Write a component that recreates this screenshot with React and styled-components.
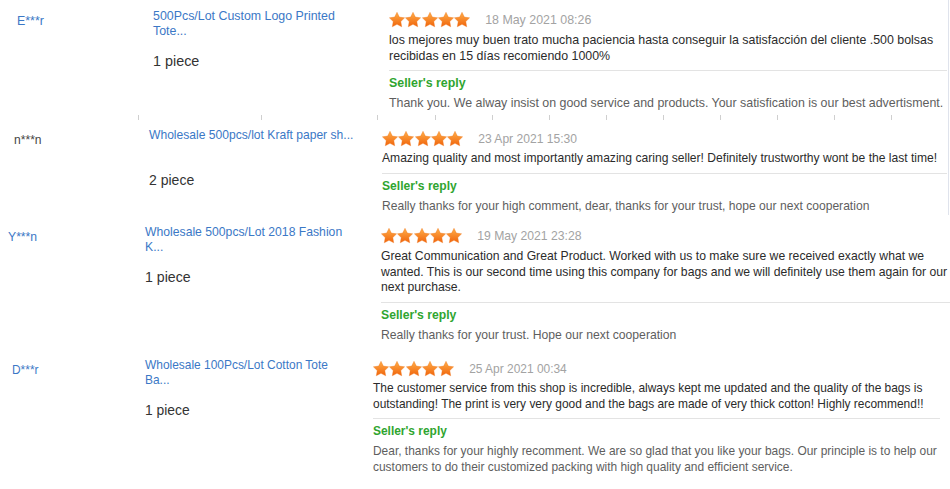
import React from 'react';
import styled, { createGlobalStyle } from 'styled-components';

const Global = createGlobalStyle`
  html, body { margin: 0; padding: 0; background: #fff; }
  body { font-family: "Liberation Sans", Arial, sans-serif; }
`;

const Page = styled.div`
  width: 950px;
  height: 489px;
  overflow: hidden;
  background: #fff;
  display: flex;
  flex-direction: column;
`;

const Strip = styled.section`
  box-sizing: border-box;
  flex-shrink: 0;
  height: ${p => p.$h}px;
  width: ${p => (p.$edge ? '949px' : '950px')};
  padding-top: ${p => p.$top}px;
  padding-left: ${p => p.$left}px;
  border-right: ${p => (p.$edge ? '1px solid #dfe3ec' : 'none')};
  font-size: ${p => p.$fs}px;
  display: flex;
  flex-direction: column;
`;

const Row = styled.div`
  display: grid;
  grid-template-columns: ${p => p.$nameW}px ${p => p.$prodW}px ${p => p.$revW}px;
  align-items: start;
`;

const Buyer = styled.div`
  margin-top: 1.5px;
  font-size: 1em;
  line-height: 15px;
  color: ${p => (p.$plain ? '#444' : '#3b78c6')};
  white-space: nowrap;
`;

const Product = styled.div`
  margin-top: -3px;
  display: flex;
  flex-direction: column;
`;

const Title = styled.div`
  height: 30px;
  font-size: 1em;
  line-height: 15px;
  color: #3b78c6;
  white-space: nowrap;
`;

const Qty = styled.div`
  margin-top: 14px;
  font-size: 1.16em;
  line-height: 17px;
  color: #333;
`;

const Review = styled.div`
  display: flex;
  flex-direction: column;
`;

const Head = styled.div`
  height: 16px;
  display: flex;
  align-items: center;
`;

const Stars = styled.div`
  display: flex;
  gap: 0.3px;
`;

const Date = styled.span`
  margin-left: 15px;
  font-size: 1em;
  color: #a3a3a3;
  white-space: nowrap;
`;

const Body = styled.div`
  margin-top: ${p => p.$gap}px;
  font-size: 1em;
  line-height: 15.5px;
  color: #2b2b2b;
`;

const Line = styled.div`
  white-space: nowrap;
`;

const Divider = styled.div`
  margin-top: 6px;
  height: 1px;
  background: #e3e3e3;
`;

const ReplyLabel = styled.div`
  margin-top: 5px;
  font-size: 1em;
  line-height: 15px;
  font-weight: bold;
  color: #2fa52f;
`;

const Reply = styled.div`
  margin-top: 5px;
  font-size: 1em;
  line-height: 15.5px;
  color: #5e5e5e;
`;

const TickRow = styled.div`
  margin-top: auto;
  height: 5px;
  display: flex;
`;

const Tick = styled.span`
  width: 1px;
  height: 5px;
  background: #cfcfcf;
  margin-left: ${p => p.$gap}px;
  flex-shrink: 0;
`;

const Star = ({ id }) => (
  <svg width="16" height="15.3" viewBox="0 0 24 23">
    <defs>
      <linearGradient id={id} x1="0" y1="0" x2="0" y2="1">
        <stop offset="0" stopColor="#ffae48" />
        <stop offset="1" stopColor="#f0640c" />
      </linearGradient>
    </defs>
    <path
      d="M12 0.5L15.53 7.65L23.41 8.79L17.71 14.35L19.05 22.21L12 18.5L4.95 22.21L6.29 14.35L0.59 8.79L8.47 7.65Z"
      fill={`url(#${id})`}
      stroke="#f07a20"
      strokeWidth="0.6"
      strokeLinejoin="round"
    />
  </svg>
);

const reviews = [
  {
    h: 120, top: 12, left: 17, nameW: 136, prodW: 236, revW: 558, edge: true, fs: 12.4, gap: 5,
    buyer: 'E***r',
    title: ['500Pcs/Lot Custom Logo Printed', 'Tote...'],
    qty: '1 piece',
    date: '18 May 2021 08:26',
    text: [
      'los mejores muy buen trato mucha paciencia hasta conseguir la satisfacción del cliente .500 bolsas',
      'recibidas en 15 días recomiendo 1000%',
    ],
    reply: ['Thank you. We alway insist on good service and products. Your satisfication is our best advertisment.'],
    ticks: [138, 261, 377, 435, 492, 549, 606, 663, 720, 777, 834, 891],
  },
  {
    h: 95, top: 11, left: 14, nameW: 135, prodW: 233, revW: 565, edge: true, plain: true, fs: 12.1, gap: 4,
    buyer: 'n***n',
    title: ['Wholesale 500pcs/lot Kraft paper sh...'],
    qty: '2 piece',
    date: '23 Apr 2021 15:30',
    text: ['Amazing quality and most importantly amazing caring seller! Definitely trustworthy wont be the last time!'],
    reply: ['Really thanks for your high comment, dear, thanks for your trust, hope our next cooperation'],
  },
  {
    h: 135, top: 13, left: 8, nameW: 137, prodW: 236, revW: 569, fs: 12.2, gap: 5,
    buyer: 'Y***n',
    title: ['Wholesale 500pcs/Lot 2018 Fashion', 'K...'],
    qty: '1 piece',
    date: '19 May 2021 23:28',
    text: [
      'Great Communication and Great Product. Worked with us to make sure we received exactly what we',
      'wanted. This is our second time using this company for bags and we will definitely use them again for our',
      'next purchase.',
    ],
    reply: ['Really thanks for your trust. Hope our next cooperation'],
  },
  {
    h: 139, top: 11, left: 12, nameW: 133, prodW: 228, revW: 567, fs: 11.95, gap: 4,
    buyer: 'D***r',
    title: ['Wholesale 100Pcs/Lot Cotton Tote', 'Ba...'],
    qty: '1 piece',
    date: '25 Apr 2021 00:34',
    text: [
      'The customer service from this shop is incredible, always kept me updated and the quality of the bags is',
      'outstanding! The print is very very good and the bags are made of very thick cotton! Highly recommend!!',
    ],
    reply: [
      'Dear, thanks for your highly recomment. We are so glad that you like your bags. Our principle is to help our',
      'customers to do their customized packing with high quality and efficient service.',
    ],
  },
];

export default function App() {
  return (
    <Page>
      <Global />
      {reviews.map((r, i) => (
        <Strip key={i} $h={r.h} $top={r.top} $left={r.left} $edge={r.edge} $fs={r.fs}>
          <Row $nameW={r.nameW} $prodW={r.prodW} $revW={r.revW}>
            <Buyer $plain={r.plain}>{r.buyer}</Buyer>
            <Product>
              <Title>
                {r.title.map((t, j) => (
                  <Line key={j}>{t}</Line>
                ))}
              </Title>
              <Qty>{r.qty}</Qty>
            </Product>
            <Review>
              <Head>
                <Stars>
                  {[0, 1, 2, 3, 4].map(s => (
                    <Star key={s} id={`g${i}${s}`} />
                  ))}
                </Stars>
                <Date>{r.date}</Date>
              </Head>
              <Body $gap={r.gap}>
                {r.text.map((t, j) => (
                  <Line key={j}>{t}</Line>
                ))}
              </Body>
              <Divider />
              <ReplyLabel>Seller's reply</ReplyLabel>
              <Reply>
                {r.reply.map((t, j) => (
                  <Line key={j}>{t}</Line>
                ))}
              </Reply>
            </Review>
          </Row>
          {r.ticks && (
            <TickRow>
              {r.ticks.map((x, j) => (
                <Tick key={j} $gap={j === 0 ? x - r.left : x - r.ticks[j - 1] - 1} />
              ))}
            </TickRow>
          )}
        </Strip>
      ))}
    </Page>
  );
}
